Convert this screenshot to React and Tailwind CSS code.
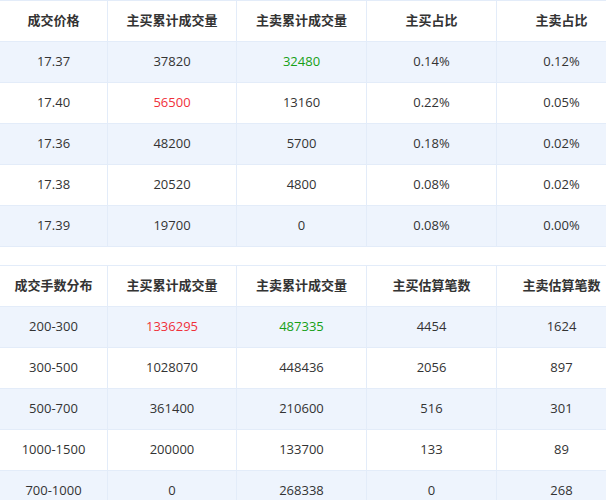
const cols = "grid grid-cols-[108px_129px_130px_130px_130px]";
function Table({ head, rows }) {
  return (
    <div className="w-[627px] border-t border-[#e3ecf9]">
      <div className={cols + " h-[41px] font-bold"}>
        {head.map((h, i) => (
          <div key={i} className="flex items-center justify-center border-r border-b border-[#e3ecf9] whitespace-nowrap">{h}</div>
        ))}
      </div>
      {rows.map((r, ri) => (
        <div key={ri} className={cols + " h-[41px] " + (ri % 2 === 0 ? "bg-[#eef4fd]" : "bg-white")}>
          {r.map((c, i) => (
            <div key={i} className={"flex items-center justify-center border-r border-b border-[#e3ecf9] " + (c.c === "r" ? "text-[#f0303a]" : c.c === "g" ? "text-[#16a016]" : "")}>{c.t ?? c}</div>
          ))}
        </div>
      ))}
    </div>
  );
}
export default function App() {
  return (
    <div className="w-[606px] h-[500px] overflow-hidden bg-white text-[13px] text-[#333]" style={{ fontFamily: '"Open Sans","Noto Sans CJK SC",sans-serif' }}>
      <Table head={["成交价格", "主买累计成交量", "主卖累计成交量", "主买占比", "主卖占比"]} rows={[
        ["17.37", "37820", { t: "32480", c: "g" }, "0.14%", "0.12%"],
        ["17.40", { t: "56500", c: "r" }, "13160", "0.22%", "0.05%"],
        ["17.36", "48200", "5700", "0.18%", "0.02%"],
        ["17.38", "20520", "4800", "0.08%", "0.02%"],
        ["17.39", "19700", "0", "0.08%", "0.00%"],
      ]} />
      <div className="h-[18px]" />
      <Table head={["成交手数分布", "主买累计成交量", "主卖累计成交量", "主买估算笔数", "主卖估算笔数"]} rows={[
        ["200-300", { t: "1336295", c: "r" }, { t: "487335", c: "g" }, "4454", "1624"],
        ["300-500", "1028070", "448436", "2056", "897"],
        ["500-700", "361400", "210600", "516", "301"],
        ["1000-1500", "200000", "133700", "133", "89"],
        ["700-1000", "0", "268338", "0", "268"],
      ]} />
    </div>
  );
}
